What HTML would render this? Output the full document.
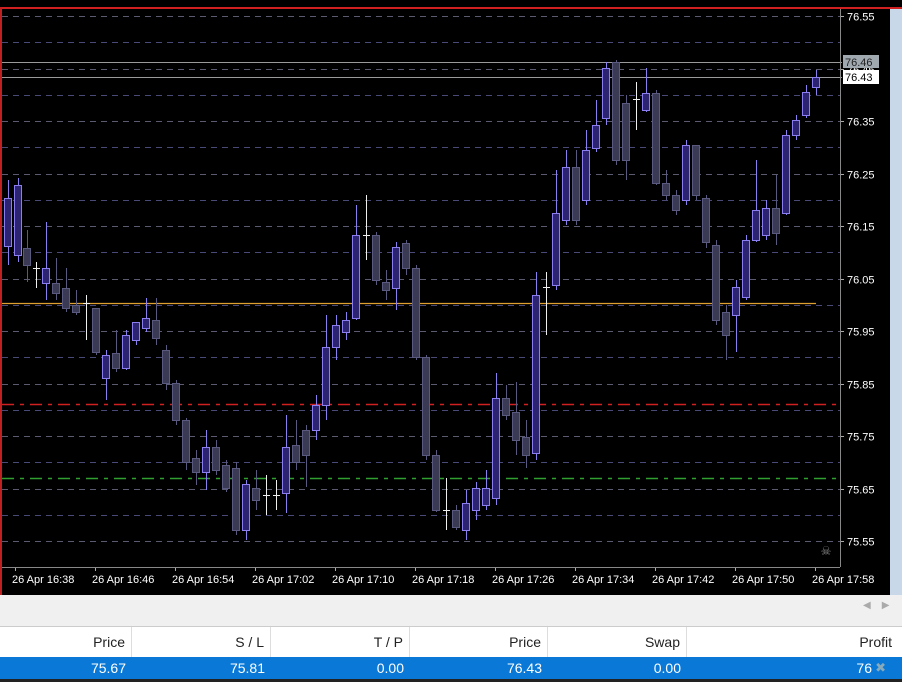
<!DOCTYPE html>
<html><head><meta charset="utf-8"><style>
*{margin:0;padding:0;box-sizing:border-box}
body{width:902px;height:682px;background:#000;overflow:hidden;font-family:"Liberation Sans",sans-serif;position:relative}
.hdr{position:absolute;top:626px;height:31px;background:#fff;width:902px;left:0;border-top:1px solid #ccc}
.hdr div,.row div{position:absolute;top:0;height:100%;text-align:right;font-size:14px;line-height:30px;padding-right:6px}
.hdr div{border-right:1px solid #ddd;color:#222}
.row{position:absolute;top:657px;height:22px;width:902px;left:0;background:#0a78d7;color:#fff}
.row div{line-height:22px}
</style></head><body>
<svg id="c" width="902" height="595" style="position:absolute;left:0;top:0">
<rect x="0" y="7" width="902" height="2" fill="#d02020"/>
<rect x="0" y="7" width="2" height="590" fill="#c02020"/>
<rect x="890" y="9" width="12" height="586" fill="#c8d8e8"/>
<g id="grid"></g>
<line x1="2" y1="303.5" x2="816" y2="303.5" stroke="#e0a030" stroke-width="1.2"/>
<line x1="2" y1="404.5" x2="840" y2="404.5" stroke="#d02020" stroke-width="1.5" stroke-dasharray="12,6,4,6"/>
<line x1="2" y1="478.5" x2="840" y2="478.5" stroke="#30a030" stroke-width="1.5" stroke-dasharray="12,6,4,6"/>
<line x1="2" y1="62.5" x2="842" y2="62.5" stroke="#9a9a9a"/>
<line x1="2" y1="77.5" x2="842" y2="77.5" stroke="#9a9a9a"/>
<g id="cd"></g>
<line x1="840.5" y1="9" x2="840.5" y2="567" stroke="#888"/>
<line x1="2" y1="567.5" x2="840" y2="567.5" stroke="#888"/>
<rect x="843" y="55" width="36" height="13" fill="#a0a8b0"/>
<rect x="843" y="70" width="36" height="14" fill="#fff"/>
<text x="845" y="66" font-size="11" fill="#222" font-family="Liberation Sans">76.46</text>
<text x="845" y="81" font-size="11" fill="#000" font-family="Liberation Sans">76.43</text>
<text x="826" y="555" font-size="12" fill="#888" text-anchor="middle">☠</text>
</svg>
<div style="position:absolute;top:595px;left:0;width:902px;height:31px;background:#f0f0f0"></div>
<div style="position:absolute;top:600px;left:863px;color:#aaa;font-size:10px">◀&nbsp;&nbsp;&nbsp;&nbsp;▶</div>
<div class="hdr">
<div style="left:0;width:132px">Price</div><div style="left:132px;width:139px">S / L</div><div style="left:271px;width:139px">T / P</div><div style="left:410px;width:138px">Price</div><div style="left:548px;width:139px">Swap</div><div style="left:687px;width:215px;border:none;padding-right:10px">Profit</div>
</div>
<div class="row">
<div style="left:0;width:132px">75.67</div><div style="left:132px;width:139px">75.81</div><div style="left:271px;width:139px">0.00</div><div style="left:410px;width:138px">76.43</div><div style="left:548px;width:139px">0.00</div><div style="left:687px;width:215px;padding-right:30px">76</div><div style="left:872px;width:20px;color:#8ab;font-size:13px">✖</div>
</div>
<div style="position:absolute;top:679px;left:0;width:902px;height:3px;background:#222"></div>
<script>
var ns="http://www.w3.org/2000/svg",g=document.getElementById('grid'),cd=document.getElementById('cd'),c=document.getElementById('c');
function el(t,a,p){var e=document.createElementNS(ns,t);for(var k in a)e.setAttribute(k,a[k]);(p||g).appendChild(e);return e}
for(var i=0;i<22;i++){var y=Math.round(16+i*26.25)+.5;el('line',{x1:2,y1:y,x2:840,y2:y,stroke:i%2?'#4a4a78':'#5a5a70','stroke-dasharray':'6,5'});
if(i%2==0){el('line',{x1:840,y1:y,x2:844,y2:y,stroke:'#aaa'});var t=el('text',{x:847,y:y+4,'font-size':11,fill:'#fff','font-family':'Liberation Sans'});t.textContent=(76.55-i*0.05).toFixed(2);}}
var tl=['16:38','16:46','16:54','17:02','17:10','17:18','17:26','17:34','17:42','17:50','17:58'];
for(var i=0;i<11;i++){var x=15+i*80;el('line',{x1:x+.5,y1:567,x2:x+.5,y2:571,stroke:'#aaa'});var t=el('text',{x:x-3,y:583,'font-size':11,fill:'#fff','font-family':'Liberation Sans'});t.textContent='26 Apr '+tl[i];}
var D=[[8,246,198,180,265],[18,185,255,178,262],[27,248,265,230,282,'r'],[36,268,268,262,288,'w'],[46,283,268,222,300],[56,283,293,258,300,'r'],[66,288,308,268,312,'r'],[76,305,312,290,315,'r'],[86,303,303,295,340,'w'],[96,308,352,308,355,'r'],[106,378,355,350,400],[116,353,368,330,372,'r'],[126,368,335,330,370],[136,340,322,322,345],[146,328,318,298,332],[156,320,338,298,345,'r'],[166,350,383,345,390,'r'],[176,383,420,380,425,'r'],[186,420,462,418,470,'r'],[196,458,472,450,485,'r'],[206,472,447,430,490],[216,447,470,440,475,'r'],[226,465,488,460,492,'r'],[236,468,530,462,535,'r'],[246,530,484,480,540],[256,500,488,470,510,'r'],[266,495,495,475,515,'w'],[276,495,495,480,510,'w'],[286,493,447,415,513],[296,445,462,420,470,'r'],[306,430,455,425,487,'r'],[316,430,405,395,440],[326,405,347,315,420],[336,347,325,315,360],[346,332,320,312,340],[356,318,235,205,320],[366,235,235,195,260,'w'],[376,235,280,232,285,'r'],[386,282,290,270,300,'r'],[396,288,247,242,310],[406,243,268,240,275,'r'],[416,268,357,265,360,'r'],[426,357,455,355,460,'r'],[436,455,510,450,512,'r'],[446,510,510,478,530,'w'],[456,510,527,505,530,'r'],[466,530,503,490,540],[476,510,488,482,520],[486,505,488,470,510],[496,498,398,373,505],[506,398,415,385,420,'r'],[516,412,440,382,455,'r'],[526,437,455,420,468,'r'],[536,453,295,272,460],[546,287,287,272,335,'w'],[556,285,213,170,290],[566,220,167,150,225],[576,167,220,150,225,'r'],[586,200,150,130,205],[596,148,125,100,152],[606,118,68,62,125],[616,62,160,60,165,'r'],[626,103,160,95,180,'r'],[636,99,99,82,130,'w'],[646,110,93,68,112],[656,93,183,90,185,'r'],[666,183,195,170,200,'r'],[676,195,210,190,215,'r'],[686,200,145,140,205],[696,145,195,145,200,'r'],[706,198,242,195,248,'r'],[716,245,320,240,325,'r'],[726,312,335,305,360,'r'],[736,315,287,280,352],[746,297,240,235,300],[756,240,210,160,242],[766,235,208,200,240],[776,208,233,175,245,'r'],[786,213,135,130,215],[796,135,120,115,140],[806,115,92,85,118],[816,87,77,70,95]];
D.forEach(function(d){var x=d[0],o=d[1],cl=d[2],h=d[3],l=d[4],t=d[5]||'b';
if(t=='w'){el('line',{x1:x+.5,y1:h,x2:x+.5,y2:l,stroke:'#eee'},cd);el('line',{x1:x-3,y1:o+.5,x2:x+4,y2:o+.5,stroke:'#eee'},cd);return;}
var col=t=='b'?'#8a7ef0':'#5a5a80',fill=t=='b'?'#2c2470':'#3a3a55';
el('line',{x1:x+.5,y1:h,x2:x+.5,y2:l,stroke:col},cd);
var top=Math.min(o,cl),bot=Math.max(o,cl);if(bot-top<3)bot=top+3;
el('rect',{x:x-3.5,y:top+.5,width:7,height:bot-top,fill:fill,stroke:col},cd);});
</script>
</body></html>
